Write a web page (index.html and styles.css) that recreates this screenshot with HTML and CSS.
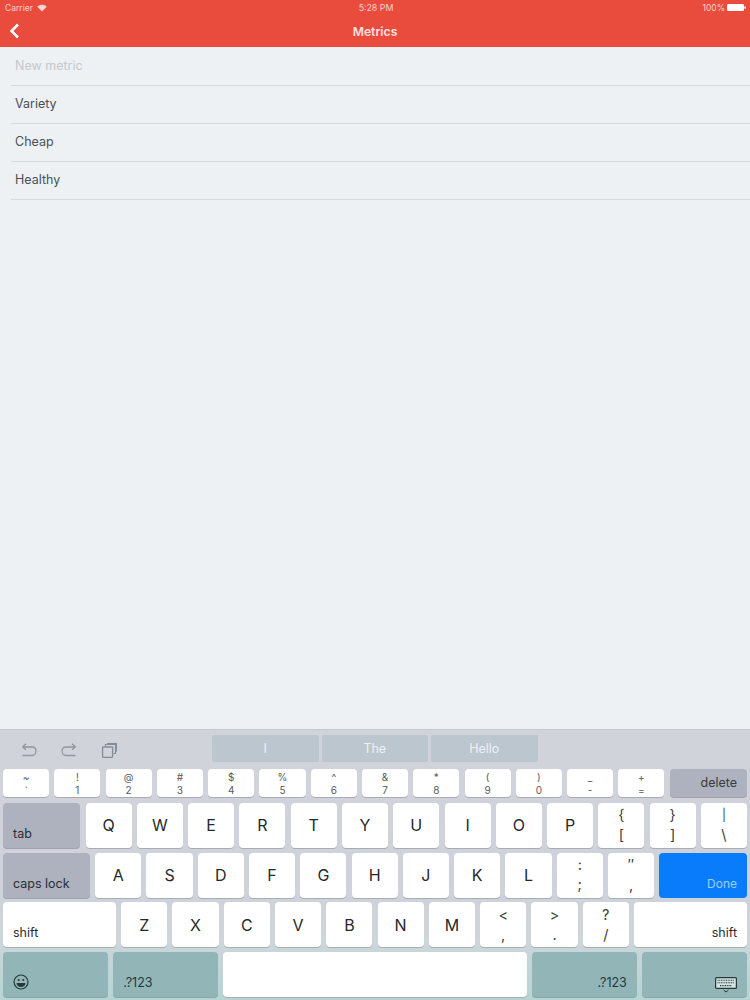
FILE: index.html
```html
<!DOCTYPE html>
<html lang="en">
<head>
<meta charset="utf-8">
<title>Metrics</title>
<link rel="stylesheet" href="styles.css">
</head>
<body>
<div class="page">
  <header class="header">
    <div class="status">
      <div class="status-left">
        <span>Carrier</span>
        <svg class="wifi" viewBox="0 0 12 9"><path d="M6 8.6 0.3 2.9C3.6-.1 8.4-.1 11.7 2.9Z" fill="#f9d5d0"/></svg>
      </div>
      <span class="status-time">5:28 PM</span>
      <div class="status-right">
        <span>100%</span>
        <svg class="battery" viewBox="0 0 19 7"><rect width="17" height="7" rx="1.2" fill="#fff"/><rect x="17.4" y="2.2" width="1.4" height="2.6" rx=".6" fill="#fff"/></svg>
      </div>
    </div>
    <div class="nav">
      <svg class="back" viewBox="0 0 11 16"><path d="M9 1.5 2.5 8 9 14.5" fill="none" stroke="#fff" stroke-width="2.6"/></svg>
      <span class="nav-title">Metrics</span>
    </div>
  </header>

  <main class="list">
    <div class="row placeholder">New metric</div>
    <div class="row">Variety</div>
    <div class="row">Cheap</div>
    <div class="row">Healthy</div>
  </main>

  <section class="keyboard">
    <div class="toolbar">
      <div class="tools">
        <svg class="tool" viewBox="0 0 16 15"><path d="M1.5 4H11C13.5 4 15 5.8 15 8S13.5 12.5 11 12.5H1.5M1.5 4 5 .8M1.5 4 5 6.8" fill="none" stroke="#8f969f" stroke-width="1.3"/></svg>
        <svg class="tool" viewBox="0 0 16 15"><path d="M14.5 4H5C2.5 4 1 5.8 1 8S2.5 12.5 5 12.5H14.5M14.5 4 11 .8M14.5 4 11 6.8" fill="none" stroke="#8f969f" stroke-width="1.3"/></svg>
        <svg class="tool" viewBox="0 0 16 15"><path d="M4.5 3.5V1.5H14.5V10.5H12.5M6.5 1.5V.6H15.4V8.5" fill="none" stroke="#858c95" stroke-width="1.1"/><rect x="1.6" y="4" width="10" height="10.3" rx=".5" fill="none" stroke="#858c95" stroke-width="1.3"/></svg>
      </div>
      <div class="suggestions">
        <div class="suggestion">I</div>
        <div class="suggestion">The</div>
        <div class="suggestion">Hello</div>
      </div>
    </div>

    <div class="keys">
      <div class="key-row numbers">
        <div class="key small"><span>~</span><span>`</span></div>
        <div class="key small"><span>!</span><span>1</span></div>
        <div class="key small"><span>@</span><span>2</span></div>
        <div class="key small"><span>#</span><span>3</span></div>
        <div class="key small"><span>$</span><span>4</span></div>
        <div class="key small"><span>%</span><span>5</span></div>
        <div class="key small"><span>^</span><span>6</span></div>
        <div class="key small"><span>&amp;</span><span>7</span></div>
        <div class="key small"><span>*</span><span>8</span></div>
        <div class="key small"><span>(</span><span>9</span></div>
        <div class="key small"><span>)</span><span>0</span></div>
        <div class="key small"><span>_</span><span>-</span></div>
        <div class="key small"><span>+</span><span>=</span></div>
        <div class="key wide special delete">delete</div>
      </div>
      <div class="key-row">
        <div class="key wide special label-left">tab</div>
        <div class="key letter">Q</div>
        <div class="key letter">W</div>
        <div class="key letter">E</div>
        <div class="key letter">R</div>
        <div class="key letter">T</div>
        <div class="key letter">Y</div>
        <div class="key letter">U</div>
        <div class="key letter">I</div>
        <div class="key letter">O</div>
        <div class="key letter">P</div>
        <div class="key symbol"><span>{</span><span>[</span></div>
        <div class="key symbol"><span>}</span><span>]</span></div>
        <div class="key symbol"><span class="pipe">|</span><span>\</span></div>
      </div>
      <div class="key-row">
        <div class="key caps special label-left">caps lock</div>
        <div class="key letter">A</div>
        <div class="key letter">S</div>
        <div class="key letter">D</div>
        <div class="key letter">F</div>
        <div class="key letter">G</div>
        <div class="key letter">H</div>
        <div class="key letter">J</div>
        <div class="key letter">K</div>
        <div class="key letter">L</div>
        <div class="key symbol"><span>:</span><span>;</span></div>
        <div class="key symbol"><span>″</span><span>,</span></div>
        <div class="key wide done label-right">Done</div>
      </div>
      <div class="key-row">
        <div class="key wide label-left">shift</div>
        <div class="key letter">Z</div>
        <div class="key letter">X</div>
        <div class="key letter">C</div>
        <div class="key letter">V</div>
        <div class="key letter">B</div>
        <div class="key letter">N</div>
        <div class="key letter">M</div>
        <div class="key symbol"><span>&lt;</span><span>,</span></div>
        <div class="key symbol"><span>&gt;</span><span>.</span></div>
        <div class="key symbol"><span>?</span><span>/</span></div>
        <div class="key wide label-right">shift</div>
      </div>
      <div class="key-row bottom">
        <div class="key teal label-left">
          <svg class="emoji" viewBox="0 0 16 16"><circle cx="8" cy="8" r="7" fill="none" stroke="#26383a" stroke-width="1.2"/><circle cx="5.7" cy="6" r="1.1" fill="#26383a"/><circle cx="10.3" cy="6" r="1.1" fill="#26383a"/><path d="M3.5 9H12.5C12.3 11.6 10.4 13 8 13S3.7 11.6 3.5 9Z" fill="#26383a"/></svg>
        </div>
        <div class="key teal label-left">.?123</div>
        <div class="key space"></div>
        <div class="key teal label-right">.?123</div>
        <div class="key teal label-right">
          <svg class="kbd" viewBox="0 0 22 16"><rect x=".6" y=".6" width="20.8" height="10.8" rx="1" fill="#d3e2e2" stroke="#26383a" stroke-width="1.2"/><path d="M2.5 3.3H19.5M2.5 5.7H19.5M5 8.6H17" stroke="#26383a" stroke-width="1.1" stroke-dasharray="1 .7"/><path d="M8.5 13 11 15 13.5 13" fill="none" stroke="#26383a"/></svg>
        </div>
      </div>
    </div>
  </section>
</div>
</body>
</html>
```
FILE: styles.css
```css
* { box-sizing: border-box; }
html, body { margin: 0; padding: 0; }
body {
  width: 750px;
  height: 1000px;
  overflow: hidden;
  font-family: Inter, "Liberation Sans", sans-serif;
  color: #2f3336;
}
.page {
  display: flex;
  flex-direction: column;
  height: 1000px;
  background: #edf1f4;
}

.header {
  height: 47px;
  background: #e94b3c;
  color: #fff;
  flex: none;
}
.status {
  height: 15px;
  padding: 0 4px 0 5px;
  display: flex;
  align-items: center;
  justify-content: space-between;
  position: relative;
  font-size: 8.5px;
  color: #f9d5d0;
}
.status-left, .status-right {
  display: flex;
  align-items: center;
  gap: 4px;
}
.status-right { gap: 2px; }
.status-time {
  position: absolute;
  left: 2px;
  right: 0;
  text-align: center;
  font-size: 8.8px;
}
.wifi { width: 10px; height: 8px; }
.battery { width: 19px; height: 7px; }
.nav {
  height: 32px;
  position: relative;
  display: flex;
  align-items: center;
  justify-content: center;
}
.nav-title {
  font-size: 12.2px;
  font-weight: 600;
  color: #fbe3e0;
}
.back {
  position: absolute;
  left: 9px;
  top: 8px;
  width: 11px;
  height: 16px;
}

.list {
  flex: 1;
  padding-left: 11px;
  padding-top: 0.6px;
}
.row {
  height: 38px;
  display: flex;
  align-items: center;
  padding-left: 4px;
  padding-bottom: 1px;
  font-size: 12.5px;
  color: #4a5054;
  border-bottom: 1px solid #d6dade;
}
.row.placeholder { color: #c3c8cd; }

.keyboard {
  flex: none;
  height: 271px;
  background: linear-gradient(#d1d3db 0, #ced2da 62%, #cdd6da 78%, #b5d4d2 100%);
  border-top: 1px solid #c6cad0;
}
.toolbar {
  height: 39px;
  position: relative;
}
.tools {
  display: flex;
  align-items: center;
  padding-left: 21px;
  padding-top: 13px;
  gap: 24px;
}
.tool { width: 16px; height: 15px; }
.suggestions {
  position: absolute;
  left: 212px;
  top: 5px;
  display: flex;
  gap: 3px;
}
.suggestion {
  width: 106.5px;
  height: 27px;
  background: #bbc6cf;
  border-radius: 2px;
  color: #eef1f4;
  font-size: 12.5px;
  display: flex;
  align-items: center;
  justify-content: center;
}

.keys {
  padding: 0 3px;
  display: flex;
  flex-direction: column;
  gap: 4.7px;
}
.key-row {
  display: flex;
  gap: 5.2px;
  height: 45px;
}
.numbers {
  height: 28px;
  margin-bottom: 1.3px;
}
.key {
  flex: 0 0 46.1px;
  background: #fff;
  border-radius: 4px;
  box-shadow: 0 1px 0 #a9adb3;
  color: #2b2e31;
  display: flex;
  align-items: center;
  justify-content: center;
  font-size: 12px;
}
.wide { flex: 1 1 0; }
.caps { flex: 0 0 87px; }
.special { background: #adb2be; box-shadow: 0 1px 0 #9ea3ad; }
.small {
  flex-direction: column;
  justify-content: flex-start;
  padding-top: 2px;
  font-size: 10px;
  line-height: 13px;
  color: #55595d;
}
.letter { font-size: 16px; color: #26292b; }
.symbol {
  flex-direction: column;
  font-size: 14.5px;
  line-height: 20px;
  color: #3a3d40;
}
.pipe { font-size: 12px; }
.delete {
  justify-content: flex-end;
  padding-right: 10px;
  font-size: 12.5px;
  padding-bottom: 1px;
  color: #383b3f;
}
.label-left {
  justify-content: flex-start;
  align-items: flex-end;
  padding: 0 10px 7px;
  font-size: 12.5px;
}
.label-right {
  justify-content: flex-end;
  align-items: flex-end;
  padding: 0 10px 7px;
  font-size: 12.5px;
}
.done { background: #087cfb; color: #9ad0ff; box-shadow: none; font-size: 12px; }
.bottom { gap: 5.5px; }
.bottom .key { flex: 1 1 0; }
.bottom .teal {
  flex: 0 0 104.7px;
  background: #92b6b8;
  box-shadow: 0 1px 0 #86a8aa;
  color: #23383b;
}
.bottom .space { flex: 1 1 0; }
.emoji { width: 16px; height: 16px; }
.kbd { width: 22px; height: 16px; margin-bottom: -3px; }
```
